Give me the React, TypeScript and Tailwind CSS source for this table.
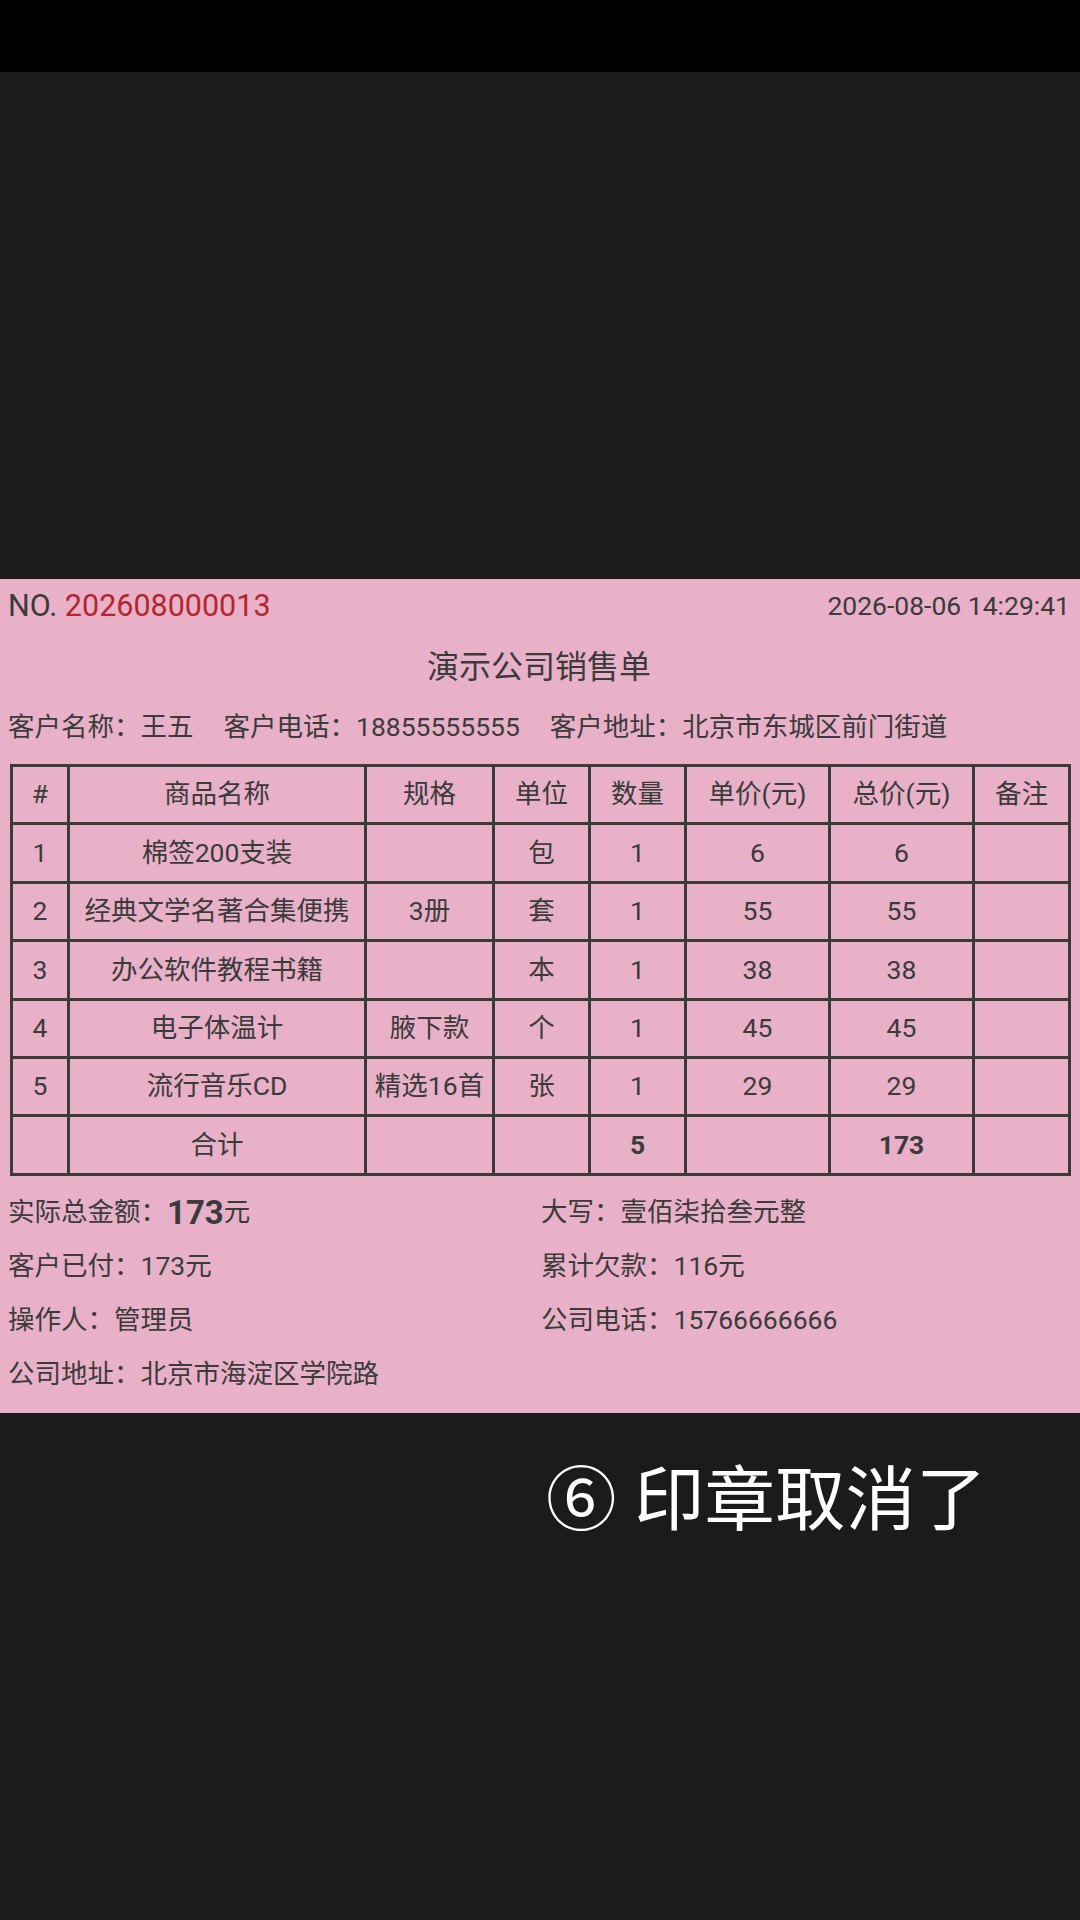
import React from "react";

const rows: string[][] = [
  ["1", "棉签200支装", "", "包", "1", "6", "6", ""],
  ["2", "经典文学名著合集便携", "3册", "套", "1", "55", "55", ""],
  ["3", "办公软件教程书籍", "", "本", "1", "38", "38", ""],
  ["4", "电子体温计", "腋下款", "个", "1", "45", "45", ""],
  ["5", "流行音乐CD", "精选16首", "张", "1", "29", "29", ""],
];

const headers = ["#", "商品名称", "规格", "单位", "数量", "单价(元)", "总价(元)", "备注"];
const widths = [57, 297, 128, 96, 96, 144, 144, 96];

export default function App() {
  return (
    <div
      className="w-[1080px] h-[1920px] flex flex-col bg-[#1b1b1b] overflow-hidden"
      style={{ fontFamily: 'Roboto, "Noto Sans CJK SC", sans-serif' }}
    >
      <div className="h-[72px] bg-black shrink-0" />
      <div className="h-[507px] shrink-0" />
      <div className="h-[834px] shrink-0 bg-[#e8b1c8] pl-[8px] pr-[10px] text-[#3b3b3b] flex flex-col">
        <div className="h-[54px] flex items-center justify-between">
          <div className="text-[30.5px] leading-none">
            NO. <span className="text-[#b3262d]">202608000013</span>
          </div>
          <div className="text-[26.5px] leading-none">2026-08-06 14:29:41</div>
        </div>
        <div className="h-[68px] flex items-center justify-center text-[32px] leading-none">
          演示公司销售单
        </div>
        <div className="h-[52px] flex items-center gap-[30px] text-[26.5px] leading-none">
          <span>客户名称：王五</span>
          <span>客户电话：18855555555</span>
          <span>客户地址：北京市东城区前门街道</span>
        </div>
        <table className="mt-[11px] ml-[2px] w-[1058px] table-fixed border-collapse text-[26.5px] leading-none">
          <colgroup>
            {widths.map((w, i) => (
              <col key={i} style={{ width: w }} />
            ))}
          </colgroup>
          <thead>
            <tr className="h-[58.4px]">
              {headers.map((h, i) => (
                <th key={i} className="border-[3px] border-[#3b3b3b] font-normal text-center p-0">
                  {h}
                </th>
              ))}
            </tr>
          </thead>
          <tbody>
            {rows.map((r, ri) => (
              <tr key={ri} className="h-[58.4px]">
                {r.map((c, ci) => (
                  <td key={ci} className="border-[3px] border-[#3b3b3b] text-center p-0 whitespace-nowrap">
                    {c}
                  </td>
                ))}
              </tr>
            ))}
            <tr className="h-[58.4px]">
              <td className="border-[3px] border-[#3b3b3b] text-center p-0"></td>
              <td className="border-[3px] border-[#3b3b3b] text-center p-0">合计</td>
              <td className="border-[3px] border-[#3b3b3b] text-center p-0"></td>
              <td className="border-[3px] border-[#3b3b3b] text-center p-0"></td>
              <td className="border-[3px] border-[#3b3b3b] text-center p-0 font-bold">5</td>
              <td className="border-[3px] border-[#3b3b3b] text-center p-0"></td>
              <td className="border-[3px] border-[#3b3b3b] text-center p-0 font-bold">173</td>
              <td className="border-[3px] border-[#3b3b3b] text-center p-0"></td>
            </tr>
          </tbody>
        </table>
        <div className="mt-[10px] grid grid-cols-[533px_1fr] text-[26.5px] leading-none">
          <div className="h-[54px] flex items-center">
            实际总金额：<span className="text-[33px] font-bold">173</span>元
          </div>
          <div className="h-[54px] flex items-center">大写：壹佰柒拾叁元整</div>
          <div className="h-[54px] flex items-center">客户已付：173元</div>
          <div className="h-[54px] flex items-center">累计欠款：116元</div>
          <div className="h-[54px] flex items-center">操作人：管理员</div>
          <div className="h-[54px] flex items-center">公司电话：15766666666</div>
          <div className="h-[54px] flex items-center">公司地址：北京市海淀区学院路</div>
        </div>
      </div>
      <div className="flex-1 pt-[53px] pl-[546px] text-white text-[70.5px] leading-none">
        ⑥ 印章取消了
      </div>
    </div>
  );
}
